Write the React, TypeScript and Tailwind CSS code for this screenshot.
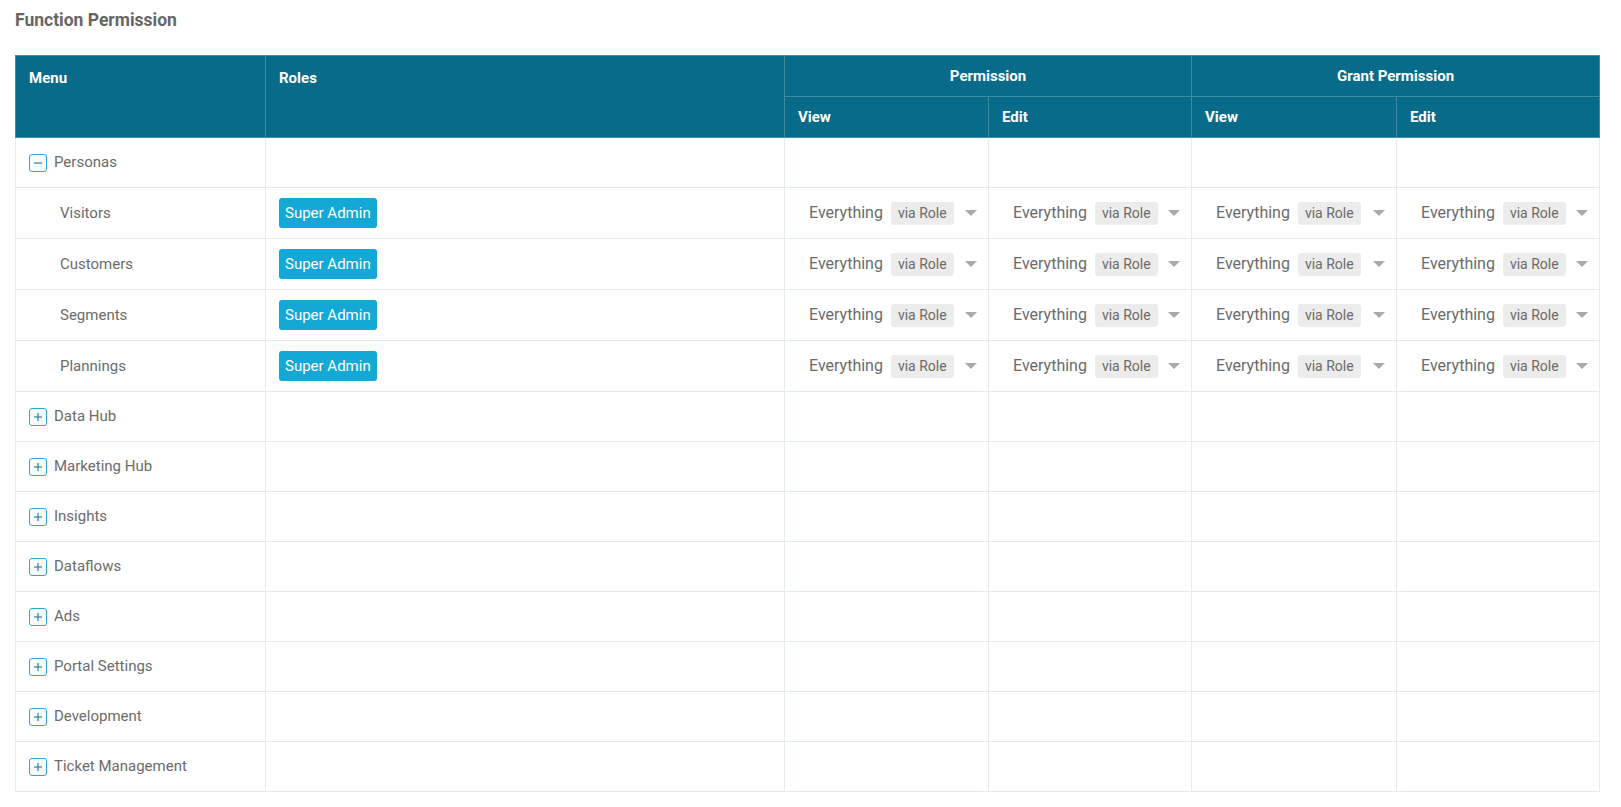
import { Fragment } from 'react';

const menus = [
  { name: 'Personas', open: true, children: ['Visitors', 'Customers', 'Segments', 'Plannings'] },
  { name: 'Data Hub', open: false, children: [] },
  { name: 'Marketing Hub', open: false, children: [] },
  { name: 'Insights', open: false, children: [] },
  { name: 'Dataflows', open: false, children: [] },
  { name: 'Ads', open: false, children: [] },
  { name: 'Portal Settings', open: false, children: [] },
  { name: 'Development', open: false, children: [] },
  { name: 'Ticket Management', open: false, children: [] },
];

const ToggleIcon = ({ open }: { open: boolean }) => (
  <span className="inline-flex items-center justify-center w-[18px] h-[18px] border-[1.5px] border-[#2aa9d9] bg-[#f7fcfe] rounded-[3px] mr-[7px] shrink-0">
    <svg width="10" height="10" viewBox="0 0 10 10">
      <line x1="1" y1="5" x2="9" y2="5" stroke="#33809b" strokeWidth="1.2" />
      {!open && <line x1="5" y1="1" x2="5" y2="9" stroke="#33809b" strokeWidth="1.2" />}
    </svg>
  </span>
);

const PermissionSelect = () => (
  <div className="flex items-center pl-[24px] pr-[11px]">
    <span className="text-[16px] text-[#6b6b6b]">Everything</span>
    <span className="ml-[8px] px-[7px] h-[23px] leading-[23px] rounded-[3px] bg-[#ececec] text-[14px] text-[#6b6b6b]">
      via Role
    </span>
    <svg className="ml-auto" width="12" height="6" viewBox="0 0 12 6">
      <path d="M0 0 L12 0 L6 6 Z" fill="#a9a9a9" />
    </svg>
  </div>
);

const App = () => {
  const th = 'border border-[#3f8ca4] text-white font-bold text-[15px]';
  const td = 'border border-[#e2ecec] p-0';

  return (
    <div className="min-h-screen bg-white font-['Roboto',sans-serif] pl-[15px] pt-[8px]">
      {/* Title */}
      <h1 className="text-[17.5px] leading-[24px] font-bold text-[#666] mb-[23px]">Function Permission</h1>

      {/* Permission table */}
      <table className="table-fixed border-collapse w-[1584px]">
        <colgroup>
          <col className="w-[250px]" />
          <col className="w-[519px]" />
          <col className="w-[204px]" />
          <col className="w-[203px]" />
          <col className="w-[205px]" />
          <col className="w-[203px]" />
        </colgroup>
        <thead className="bg-[#086b8a]">
          <tr className="h-[41px]">
            <th rowSpan={2} className={`${th} text-left align-top pl-[13px] pt-[11px]`}>
              Menu
            </th>
            <th rowSpan={2} className={`${th} text-left align-top pl-[13px] pt-[11px]`}>
              Roles
            </th>
            <th colSpan={2} className={`${th} text-center pt-[1px]`}>
              Permission
            </th>
            <th colSpan={2} className={`${th} text-center pt-[1px]`}>
              Grant Permission
            </th>
          </tr>
          <tr className="h-[41px]">
            {['View', 'Edit', 'View', 'Edit'].map((label, i) => (
              <th key={i} className={`${th} text-left pl-[13px] pt-[1px]`}>
                {label}
              </th>
            ))}
          </tr>
        </thead>
        <tbody>
          {menus.map((menu) => (
            <Fragment key={menu.name}>
              <tr className="h-[50px]">
                <td className={td}>
                  <div className="flex items-center pl-[13px] text-[15px] text-[#6b6b6b]">
                    <ToggleIcon open={menu.open} />
                    {menu.name}
                  </div>
                </td>
                <td className={td} />
                <td className={td} />
                <td className={td} />
                <td className={td} />
                <td className={td} />
              </tr>
              {menu.open &&
                menu.children.map((child) => (
                  <tr key={child} className="h-[51px]">
                    <td className={td}>
                      <div className="pl-[44px] text-[15px] text-[#6b6b6b]">{child}</div>
                    </td>
                    <td className={td}>
                      <div className="pl-[13px]">
                        <span className="inline-block h-[30px] leading-[30px] px-[6px] rounded-[3px] bg-[#14a8d7] text-white text-[15px]">
                          Super Admin
                        </span>
                      </div>
                    </td>
                    {[0, 1, 2, 3].map((i) => (
                      <td key={i} className={td}>
                        <PermissionSelect />
                      </td>
                    ))}
                  </tr>
                ))}
            </Fragment>
          ))}
        </tbody>
      </table>
    </div>
  );
};

export default App;
